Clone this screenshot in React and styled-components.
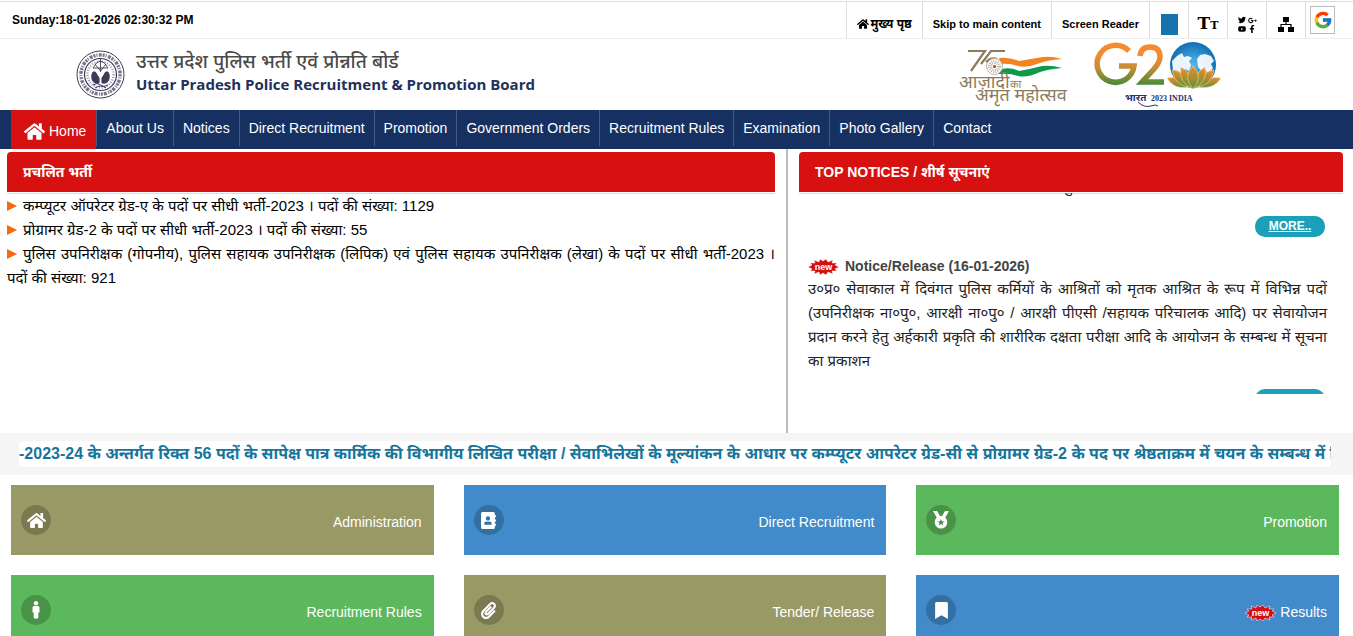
import styled, { createGlobalStyle } from "styled-components";
import {
  FaAddressBook,
  FaBookmark,
  FaFacebookF,
  FaGooglePlusG,
  FaHome,
  FaPaperclip,
  FaTwitter,
  FaYoutube,
} from "react-icons/fa";
import { FcGoogle } from "react-icons/fc";

const GlobalStyle = createGlobalStyle`
  * {
    box-sizing: border-box;
  }
  body {
    margin: 0;
    background-color: #ffffff;
    color: #000000;
    font-family: "Liberation Sans", "Noto Sans Devanagari", "Noto Sans", sans-serif;
    font-size: 14px;
  }
  a {
    color: inherit;
    text-decoration: none;
  }
`;

const TopBar = styled.div`
  display: flex;
  justify-content: space-between;
  height: 38px;
  margin-top: 1px;
  padding: 0 12px;
  border-top: 1px solid #dddddd;
  border-bottom: 1px solid #eeeeee;
`;

const DateText = styled.div`
  font-size: 12px;
  font-weight: bold;
  line-height: 36px;
`;

const TopLinks = styled.ul`
  display: flex;
  margin: 0;
  padding: 0;
  list-style: none;
`;

const TopItem = styled.li`
  display: flex;
  align-items: center;
  justify-content: center;
  min-width: 39px;
  padding: ${(props) => (props.$icon ? "8px 0 0" : "8px 10px 0")};
  border-left: 1px solid #dddddd;
  font-size: ${(props) => (props.$hindi ? "12px" : "11px")};
  font-weight: bold;
  line-height: 28px;
  white-space: nowrap;

  a {
    display: flex;
    align-items: center;
    gap: 2px;
  }
`;

const ThemeButton = styled.button`
  width: 17px;
  height: 21px;
  padding: 0;
  border: 0;
  background-color: #1673ab;
`;

const TextSizeButton = styled.button`
  padding: 0;
  border: 0;
  background: none;
  font-family: "DejaVu Serif", serif;
  font-size: 17px;
  font-weight: bold;
  line-height: 20px;

  small {
    font-size: 11px;
  }
`;

const SocialGrid = styled.span`
  display: grid;
  grid-template-columns: 8px 8px;
  gap: 0 2px;
  stroke: #000000;
  stroke-width: 20px;
`;

const GoogleCell = styled.li`
  padding: 4px 6px 0 4px;
  border-left: 1px solid #dddddd;
`;

const GoogleLink = styled.a`
  display: flex;
  align-items: center;
  justify-content: center;
  width: 25px;
  height: 28px;
  border: 1px solid #bbbbbb;
`;

const Header = styled.header`
  display: flex;
  align-items: center;
  justify-content: space-between;
  height: 71px;
  padding: 0 131px 0 76px;
`;

const Brand = styled.a`
  display: flex;
  align-items: center;
  gap: 11px;
`;

const TitleHindi = styled.div`
  color: #4a4a4a;
  font-size: 19px;
  font-weight: 500;
  line-height: 22px;
`;

const TitleEnglish = styled.div`
  color: #22305c;
  font-family: "Open Sans", sans-serif;
  font-size: 15px;
  font-weight: bold;
  line-height: 22px;
  padding-bottom: 4px;
`;

const Logos = styled.div`
  display: flex;
  gap: 16px;
`;

const Nav = styled.nav`
  display: flex;
  height: 39px;
  padding-left: 11px;
  background-color: #173062;
  color: #ffffff;
`;

const NavLink = styled.a`
  height: 36px;
  padding: 0 9px;
  border-left: 1px solid #46597f;
  line-height: 36px;
  white-space: nowrap;
`;

const HomeLink = styled.a`
  display: flex;
  align-items: center;
  gap: 4px;
  height: 39px;
  padding: 3px 10px 0 13px;
  background-color: #d71010;
`;

const Main = styled.main`
  display: grid;
  grid-template-columns: 788fr 565fr;
  height: 284px;
`;

const Column = styled.section`
  padding: ${(props) => (props.$divider ? "3px 11px 0 7px" : "3px 10px 0 11px")};
  border-right: ${(props) => (props.$divider ? "2px solid #bbbbbb" : "0")};
`;

const PanelTitle = styled.h2`
  height: 40px;
  margin: 0 0 1px;
  padding: 0 16px;
  border-radius: 4px 4px 0 0;
  background-color: #d71010;
  box-shadow: 0 1px 0 #ffffff, 0 2px 0 #dddddd;
  color: #ffffff;
  font-size: 14px;
  font-weight: bold;
  line-height: 40px;
`;

const VacancyList = styled.ul`
  margin: 0;
  padding: 1px 0 0;
  list-style: none;
  font-size: 15px;
  line-height: 24px;
  text-align: justify;
`;

const Arrow = styled.span`
  display: inline-block;
  margin-right: 6px;
  border-top: 5px solid transparent;
  border-bottom: 5px solid transparent;
  border-left: 10px solid #f76b0c;
`;

const Ticker = styled.div`
  height: 201px;
  padding: 0 16px 0 9px;
  overflow: hidden;
`;

const ScrolledLine = styled.p`
  display: flex;
  align-items: flex-end;
  justify-content: center;
  overflow: hidden;
  height: 3px;
  margin: 0;
  color: #222222;
  font-size: 15px;
  line-height: 19px;
`;

const MoreRow = styled.div`
  display: flex;
  justify-content: flex-end;
  padding: 20px 2px 18px 0;
`;

const MoreLink = styled.a`
  width: 70px;
  height: 21px;
  border-radius: 10px;
  background-color: #1aa0b8;
  color: #ffffff;
  font-size: 12px;
  font-weight: bold;
  line-height: 21px;
  text-align: center;
  text-decoration: underline;
`;

const NoticeTitle = styled.h3`
  display: flex;
  align-items: center;
  gap: 6px;
  margin: 0;
  color: #444444;
  font-size: 14px;
  line-height: 22px;
`;

const NoticeText = styled.p`
  margin: 0 0 -4px;
  color: #222222;
  font-size: 15px;
  line-height: 24px;
  text-align: justify;
`;

const NewsBand = styled.div`
  height: 42px;
  padding: 8px 22px 0 19px;
  background-color: #f5f5f5;
`;

const NewsText = styled.a`
  display: block;
  overflow: hidden;
  height: 26px;
  border-radius: 4px;
  background-color: #ffffff;
  color: #17759b;
  font-size: 16px;
  font-weight: bold;
  line-height: 26px;
  white-space: nowrap;
`;

const Tiles = styled.div`
  display: grid;
  grid-template-columns: repeat(3, 1fr);
  gap: 20px 30px;
  padding: 10px 14px 0 11px;
`;

const Tile = styled.a`
  display: flex;
  align-items: center;
  justify-content: space-between;
  height: 70px;
  padding: 0 12px 0 10px;
  background-color: ${(props) => props.$color};
  color: #ffffff;
`;

const TileIcon = styled.span`
  display: flex;
  align-items: center;
  justify-content: center;
  width: 30px;
  height: 30px;
  border-radius: 50%;
  background-color: rgba(0, 0, 0, 0.2);
  font-size: 17px;
`;

const TileLabel = styled.span`
  display: flex;
  align-items: center;
  gap: 4px;
  padding-top: 4px;
`;

const Emblem = () => (
  <svg width="49" height="49" viewBox="0 0 49 49" fill="none" stroke="#3c3b57">
    <circle cx="24.5" cy="24.5" r="23.5" strokeWidth="1" />
    <circle cx="24.5" cy="24.5" r="19.6" strokeWidth="3.4" strokeDasharray="2 1 1 1.4 3 1" opacity="0.7" />
    <circle cx="24.5" cy="24.5" r="16" strokeWidth="1.2" />
    <circle cx="24.5" cy="24.5" r="13" strokeWidth="2.4" strokeDasharray="1 1.6" opacity="0.5" />
    <path strokeWidth="0.9" d="M17 18 Q24.5 4 32 18 M24.5 9 V22 M17 18 H32 M19 14 L24.5 21 L30 14" />
    <path
      fill="#3c3b57"
      d="M17 22 Q20 21 21 25 Q24 27 23 33 Q17 34 16 29 Q15 25 17 22 Z M32 22 Q29 21 28 25 Q25 27 26 33 Q32 34 33 29 Q34 25 32 22 Z"
    />
    <path d="M17 35 Q21 32 24.5 35 Q28 38 32 35 M19 38 Q24.5 34 30 38" />
  </svg>
);

const AmritLogo = () => (
  <svg width="117" height="68" viewBox="0 0 117 68" fontFamily="Noto Sans Devanagari, sans-serif">
    <g fill="none" stroke="#8c7b5c" strokeWidth="2.2">
      <path d="M9 10 H26 L12 30" />
      <path d="M46 10 H32 L22 23" />
      <path d="M27 21 Q32 16 38 18" />
    </g>
    <path fill="#f58220" d="M40 17 Q50 16 60 20 Q72 18 84 16 Q93 15 103 18 Q88 19 78 23 Q68 27 59 25 Q50 22 42 23 Z" />
    <path fill="#0d9b49" d="M43 28 Q52 26 60 30 Q71 28 83 25 Q93 24 103 27 Q90 28 81 31 Q68 37 59 35 Q51 32 39 33 Z" />
    <circle cx="35.5" cy="25.5" r="8" fill="#ffffff" stroke="#b9ae98" />
    <circle cx="35.5" cy="25.5" r="4.5" fill="none" stroke="#b3a58f" strokeWidth="4" strokeDasharray="0.7 1.1" />
    <circle cx="35.5" cy="25.5" r="1.6" fill="#a84f38" />
    <g fill="#8c7b5c">
      <text x="0" y="47" fontSize="18">आज़ादी</text>
      <text x="51" y="47" fontSize="11">का</text>
      <text x="16" y="60" fontSize="18">अमृत महोत्सव</text>
    </g>
  </svg>
);

const G20Logo = () => (
  <svg width="130" height="68" viewBox="0 0 130 68">
    <defs>
      <linearGradient id="flag" gradientUnits="userSpaceOnUse" x1="0" y1="2" x2="0" y2="45">
        <stop offset="0.3" stopColor="#f58a30" />
        <stop offset="0.6" stopColor="#c08c34" />
        <stop offset="1" stopColor="#3d8a3a" />
      </linearGradient>
      <linearGradient id="petal" x1="0" y1="0" x2="0" y2="1">
        <stop offset="0" stopColor="#f08c28" />
        <stop offset="1" stopColor="#5f9138" />
      </linearGradient>
      <radialGradient id="globe">
        <stop offset="0" stopColor="#5bb8e8" />
        <stop offset="1" stopColor="#0f70b4" />
      </radialGradient>
    </defs>
    <g fill="none" stroke="url(#flag)" strokeWidth="5.5">
      <path d="M37 10 A18.5 18.5 0 1 0 42 25 H27" />
      <path d="M48 15 Q49 6 58 6 Q68 6 68 16 Q68 21 62 28 L50 41 H72" />
    </g>
    <circle cx="101" cy="24" r="23" fill="url(#globe)" />
    <path
      fill="#ffffff"
      opacity="0.9"
      d="M80 20 L85 15 L90 12 L92 16 L96 15 L100 17 L97 20 L99 24 L97 30 L93 28 L90 34 L86 30 L81 29 Z M105 18 L108 14 L113 13 L119 15 L122 20 L119 23 L121 27 L117 34 L113 29 L110 31 L106 26 Z"
    />
    <g fill="url(#petal)" stroke="#f7d9a0" strokeWidth="0.6">
      <path d="M75 37 Q87 34 96 46 Q82 49 75 37 Z M129 37 Q116 34 106 46 Q122 49 129 37 Z" />
      <path d="M80 29 Q92 30 99 46 Q83 46 80 29 Z M122 29 Q110 30 103 46 Q119 46 122 29 Z" />
      <path d="M89 26 Q100 32 101 48 Q86 42 89 26 Z M113 26 Q102 32 101 48 Q116 42 113 26 Z" />
      <path d="M101 25 Q90 36 101 48 Q112 36 101 25 Z" />
    </g>
    <g fill="#29306f">
      <text x="33" y="60" fontSize="10" fontWeight="bold" fontFamily="Noto Sans Devanagari, sans-serif">
        भारत
      </text>
      <text x="59" y="60" fontSize="8" fontWeight="bold" fontFamily="Liberation Serif, serif">
        2023 INDIA
      </text>
    </g>
    <path fill="none" stroke="#29306f" d="M46 61 Q52 67 59 65 Q64 63 66 65" />
  </svg>
);

const SitemapIcon = () => (
  <svg width="16" height="15" viewBox="0 0 16 15">
    <path d="M5 0 H11 V5 H5 Z M0 10 H6 V15 H0 Z M10 10 H16 V15 H10 Z" />
    <path fill="none" stroke="#000000" strokeWidth="1.2" d="M8 5 V7.5 M3 10 V7.5 H13 V10" />
  </svg>
);

const BurstSvg = styled.svg`
  flex: none;
  margin-top: 2px;
`;

const NewBadge = () => (
  <BurstSvg width="31" height="16" viewBox="0 0 31 16">
    <path
      fill="#d40f10"
      stroke="#ffffff"
      strokeWidth="0.5"
      d="M0 8 L4 6 L2 4 L7 4 L6 1 L11 3 L12 0 L15 2 L18 0 L20 3 L25 1 L24 4 L29 4 L27 6 L31 8 L27 10 L29 12 L24 12 L25 15 L20 13 L18 16 L15 14 L12 16 L11 13 L6 15 L7 12 L2 12 L4 10 Z"
    />
    <text x="15.5" y="11" fill="#ffffff" fontSize="9" fontWeight="bold" textAnchor="middle">
      new
    </text>
  </BurstSvg>
);

const MedalIcon = () => (
  <svg width="18" height="18" viewBox="0 0 18 18" fill="#ffffff">
    <path d="M1 0 H5 L8 5 H10 L13 0 H17 L13 7 H5 Z" />
    <path
      fillRule="evenodd"
      d="M9 5 A6.3 6.3 0 1 0 9 17.6 A6.3 6.3 0 1 0 9 5 Z M9 8 L10 10.2 L12.5 10.4 L10.6 12 L11.2 14.4 L9 13 L6.8 14.4 L7.4 12 L5.5 10.4 L8 10.2 Z"
    />
  </svg>
);

const PersonIcon = () => (
  <svg width="8" height="18" viewBox="0 0 8 18" fill="#ffffff">
    <circle cx="4" cy="2.2" r="2.2" />
    <path d="M2 5 H6 Q7.5 5 7.5 6.5 V11.5 H6.3 V17 Q4 18.5 1.7 17 V11.5 H0.5 V6.5 Q0.5 5 2 5 Z" />
  </svg>
);

const menu = [
  "About Us",
  "Notices",
  "Direct Recruitment",
  "Promotion",
  "Government Orders",
  "Recruitment Rules",
  "Examination",
  "Photo Gallery",
  "Contact",
];

const vacancies = [
  "कम्प्यूटर ऑपरेटर ग्रेड-ए के पदों पर सीधी भर्ती-2023 । पदों की संख्या: 1129",
  "प्रोग्रामर ग्रेड-2 के पदों पर सीधी भर्ती-2023 । पदों की संख्या: 55",
  "पुलिस उपनिरीक्षक (गोपनीय), पुलिस सहायक उपनिरीक्षक (लिपिक) एवं पुलिस सहायक उपनिरीक्षक (लेखा) के पदों पर सीधी भर्ती-2023 । पदों की संख्या: 921",
];

const tiles = [
  { label: "Administration", color: "#999966", icon: <FaHome size={19} /> },
  { label: "Direct Recruitment", color: "#428bca", icon: <FaAddressBook /> },
  { label: "Promotion", color: "#5cb85c", icon: <MedalIcon /> },
  { label: "Recruitment Rules", color: "#5cb85c", icon: <PersonIcon /> },
  { label: "Tender/ Release", color: "#999966", icon: <FaPaperclip /> },
  { label: "Results", color: "#428bca", icon: <FaBookmark />, isNew: true },
];

const App = () => {
  return (
    <>
      <GlobalStyle />
      <TopBar>
        <DateText>Sunday:18-01-2026 02:30:32 PM</DateText>
        <TopLinks>
          <TopItem $hindi>
            <a href="#home">
              <FaHome size={12} /> मुख्य पृष्ठ
            </a>
          </TopItem>
          <TopItem>
            <a href="#main">Skip to main content</a>
          </TopItem>
          <TopItem>
            <a href="#reader">Screen Reader</a>
          </TopItem>
          <TopItem $icon>
            <ThemeButton aria-label="Theme" />
          </TopItem>
          <TopItem $icon>
            <TextSizeButton aria-label="Text size">
              T<small>T</small>
            </TextSizeButton>
          </TopItem>
          <TopItem $icon>
            <a href="#social" aria-label="Social">
              <SocialGrid>
                <FaTwitter size={8} />
                <FaGooglePlusG size={9} />
                <FaYoutube size={8} />
                <FaFacebookF size={8} />
              </SocialGrid>
            </a>
          </TopItem>
          <TopItem $icon>
            <a href="#sitemap" aria-label="Sitemap">
              <SitemapIcon />
            </a>
          </TopItem>
          <GoogleCell>
            <GoogleLink href="#search" aria-label="Google">
              <FcGoogle size={20} />
            </GoogleLink>
          </GoogleCell>
        </TopLinks>
      </TopBar>
      <Header>
        <Brand href="#home">
          <Emblem />
          <div>
            <TitleHindi>उत्तर प्रदेश पुलिस भर्ती एवं प्रोन्नति बोर्ड</TitleHindi>
            <TitleEnglish>Uttar Pradesh Police Recruitment &amp; Promotion Board</TitleEnglish>
          </div>
        </Brand>
        <Logos>
          <AmritLogo />
          <G20Logo />
        </Logos>
      </Header>
      <Nav>
        <HomeLink href="#home">
          <FaHome size={21} /> Home
        </HomeLink>
        {menu.map((item) => (
          <NavLink href="#menu" key={item}>
            {item}
          </NavLink>
        ))}
      </Nav>
      <Main id="main">
        <Column $divider>
          <PanelTitle>प्रचलित भर्ती</PanelTitle>
          <VacancyList>
            {vacancies.map((item) => (
              <li key={item}>
                <Arrow />
                <a href="#vacancy">{item}</a>
              </li>
            ))}
          </VacancyList>
        </Column>
        <Column>
          <PanelTitle>TOP NOTICES / शीर्ष सूचनाएं</PanelTitle>
          <Ticker>
            <ScrolledLine>पु</ScrolledLine>
            <MoreRow>
              <MoreLink href="#more">MORE..</MoreLink>
            </MoreRow>
            <NoticeTitle>
              <NewBadge /> Notice/Release (16-01-2026)
            </NoticeTitle>
            <NoticeText>
              उ०प्र० सेवाकाल में दिवंगत पुलिस कर्मियों के आश्रितों को मृतक आश्रित के रूप में विभिन्न पदों (उपनिरीक्षक
              ना०पु०, आरक्षी ना०पु० / आरक्षी पीएसी /सहायक परिचालक आदि) पर सेवायोजन प्रदान करने हेतु अर्हकारी प्रकृति की
              शारीरिक दक्षता परीक्षा आदि के आयोजन के सम्बन्ध में सूचना का प्रकाशन
            </NoticeText>
            <MoreRow>
              <MoreLink href="#more">MORE..</MoreLink>
            </MoreRow>
          </Ticker>
        </Column>
      </Main>
      <NewsBand>
        <NewsText href="#news">
          -2023-24 के अन्तर्गत रिक्त 56 पदों के सापेक्ष पात्र कार्मिक की विभागीय लिखित परीक्षा / सेवाभिलेखों के
          मूल्यांकन के आधार पर कम्प्यूटर आपरेटर ग्रेड-सी से प्रोग्रामर ग्रेड-2 के पद पर श्रेष्ठताक्रम में चयन के
          सम्बन्ध में विज्ञप्ति
        </NewsText>
      </NewsBand>
      <Tiles>
        {tiles.map((tile) => (
          <Tile href="#tile" key={tile.label} $color={tile.color}>
            <TileIcon>{tile.icon}</TileIcon>
            <TileLabel>
              {tile.isNew && <NewBadge />}
              {tile.label}
            </TileLabel>
          </Tile>
        ))}
      </Tiles>
    </>
  );
};

export default App;
